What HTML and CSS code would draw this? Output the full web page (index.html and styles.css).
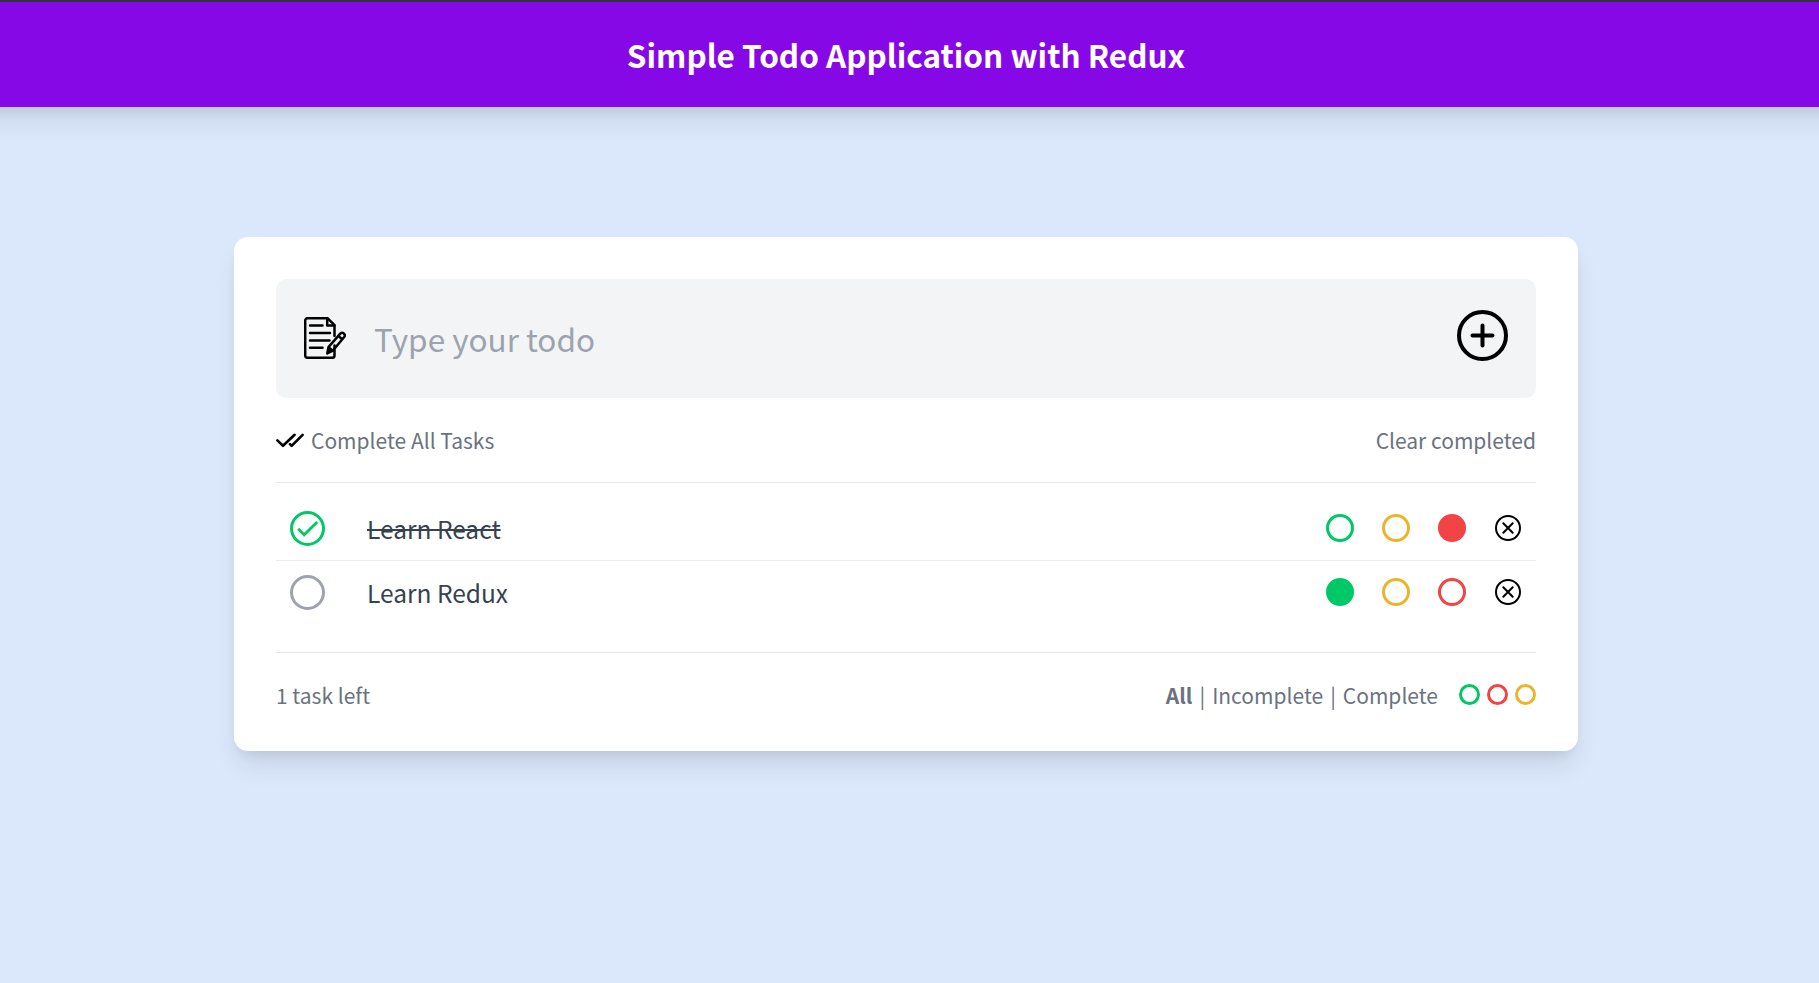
FILE: index.html
```
<!DOCTYPE html>
<html lang="en">
<head>
<meta charset="utf-8">
<title>Simple Todo Application with Redux</title>
<link rel="stylesheet" href="styles.css">
</head>
<body>
<header class="navbar"><h1>Simple Todo Application with Redux</h1></header>
<main class="card">
  <form class="add">
    <svg class="note" viewBox="0 0 42 42" fill="none" stroke="#000" stroke-width="2.5" stroke-linecap="round" stroke-linejoin="round">
      <path d="M30.5 28.5V38.4a2.4 2.4 0 0 1-2.4 2.4H3.6a2.4 2.4 0 0 1-2.4-2.4V3.6a2.4 2.4 0 0 1 2.4-2.4H23.5l7 7V19"/>
      <path d="M23.2 1.5V8.6H30.5M6 8.5H18.5M6 16H26M6 23.4H25.5M6 30.8H18.5"/>
      <path d="M23.3 36.4l1.2-6.3L36.5 16.4a2.6 2.6 0 0 1 3.7 3.6L28.8 33.7zM24.5 30.1l4.3 3.6M34.4 19l3.7 3.2M23.3 36.4l2.3-3"/>
    </svg>
    <input class="field" type="text" placeholder="Type your todo">
    <button class="plus" type="button" aria-label="Add"><svg viewBox="0 0 51 51" fill="none" stroke="#000" stroke-width="4" stroke-linecap="round"><circle cx="25.5" cy="25.5" r="23.5"/><path d="M25.5 15.5v20M15.5 25.5h20"/></svg></button>
  </form>
  <div class="bar actions">
    <span class="all"><svg class="ticks" viewBox="0 0 28 15" fill="none" stroke="#000" stroke-width="2.6" stroke-linecap="round" stroke-linejoin="round"><path d="M1.4 7.4l5.6 5.4L18.6 1.8M14 11.2l1.6 1.6L26.6 1.8"/></svg>Complete All Tasks</span>
    <span>Clear completed</span>
  </div>
  <ul class="list">
    <li class="row">
      <span class="check checked"><svg viewBox="0 0 35 35" fill="none" stroke="#00c866" stroke-width="2.8"><path d="M8.2 17.8l6 6L27.2 11"/></svg></span>
      <span class="name done">Learn React</span>
      <i class="dot green"></i><i class="dot yellow"></i><i class="dot red full"></i>
      <svg class="cancel" viewBox="0 0 28 28" fill="none" stroke="#000" stroke-width="2" stroke-linecap="round"><circle cx="14" cy="14" r="12"/><path d="M9.3 9.3l9.4 9.4M18.7 9.3l-9.4 9.4"/></svg>
    </li>
    <li class="row">
      <span class="check"></span>
      <span class="name">Learn Redux</span>
      <i class="dot green full"></i><i class="dot yellow"></i><i class="dot red"></i>
      <svg class="cancel" viewBox="0 0 28 28" fill="none" stroke="#000" stroke-width="2" stroke-linecap="round"><circle cx="14" cy="14" r="12"/><path d="M9.3 9.3l9.4 9.4M18.7 9.3l-9.4 9.4"/></svg>
    </li>
  </ul>
  <footer class="bar foot">
    <span>1 task left</span>
    <div class="filters"><b>All</b><span>|</span><span>Incomplete</span><span>|</span><span>Complete</span>
      <div class="colors"><i class="dot small green"></i><i class="dot small red"></i><i class="dot small yellow"></i></div>
    </div>
  </footer>
</main>
</body>
</html>
```
FILE: styles.css
```
* { box-sizing: border-box; }
html { background: #dbe8fc; }
body {
  margin: 0;
  height: 983px;
  overflow: hidden;
  font-family: "Noto Sans CJK SC", sans-serif;
  color: #6b7280;
}
.navbar {
  height: 107px;
  margin: 0 -40px;
  border-top: 2px solid #33313f;
  padding-right: 7px;
  background: #8708e7;
  display: flex;
  align-items: center;
  justify-content: center;
  box-shadow: 0 17.5px 26.25px -5.25px rgba(0,0,0,.1), 0 7px 10.5px -3.5px rgba(0,0,0,.06);
}
h1 { margin: 0; font-size: 31.5px; line-height: 49px; font-weight: 700; color: #fff; }
.card {
  width: 1344px;
  height: 514px;
  margin: 130px 0 0 234px;
  padding: 42px;
  background: #fff;
  border-radius: 14px;
  box-shadow: 0 17.5px 26.25px -5.25px rgba(0,0,0,.1), 0 7px 10.5px -3.5px rgba(0,0,0,.06);
}
.add {
  height: 119px;
  padding: 0 28px 2px;
  border-radius: 10.5px;
  background: #f3f4f6;
  display: flex;
  align-items: center;
}
.note { width: 42px; height: 42px; flex: none; }
.field {
  flex: 1;
  height: 63px;
  margin-left: 28px;
  padding: 0;
  border: 0;
  outline: 0;
  background: transparent;
  font: 31.5px "Noto Sans CJK SC", sans-serif;
}
.field::placeholder { color: #9ca3af; opacity: 1; }
.plus { width: 51px; height: 51px; margin-bottom: 4px; padding: 0; border: 0; background: none; }
.plus svg { display: block; width: 51px; height: 51px; }
.bar { display: flex; justify-content: space-between; align-items: flex-start; font-size: 21px; line-height: 35px; }
.actions { height: 84px; padding-top: 25px; }
.all { display: flex; align-items: center; gap: 7px; }
.ticks { width: 28px; height: 15px; margin-bottom: 1px; }
.list { margin: 0; padding: 14px 0 28px; list-style: none; border: solid #e5e7eb; border-width: 1px 0; }
.row {
  height: 63px;
  padding: 0 14px;
  display: flex;
  align-items: center;
  gap: 28px;
}
.row + .row { height: 64px; border-top: 1px solid #ebecee; }
.check { width: 35px; height: 35px; border: 3px solid #9ca3af; border-radius: 50%; }
.checked { border-color: #00c866; }
.check svg { display: block; width: 35px; height: 35px; margin: -3px; }
.name { flex: 1; margin-left: 14px; font-size: 24.5px; line-height: 35px; color: #374151; }
.done { text-decoration: line-through; text-decoration-thickness: 2px; }
.dot { width: 28px; height: 28px; margin-bottom: 1px; border: 3px solid; border-radius: 50%; }
.green { color: #00c866; }
.yellow { color: #eab52b; }
.red { color: #f24444; }
.full { background: currentColor; }
.cancel { width: 28px; height: 28px; margin-bottom: 1px; }
.foot { padding-top: 25px; }
.filters { display: flex; gap: 7px; }
.colors { display: flex; gap: 7px; margin: 6px 0 0 14px; }
.small { width: 21px; height: 21px; }
```
